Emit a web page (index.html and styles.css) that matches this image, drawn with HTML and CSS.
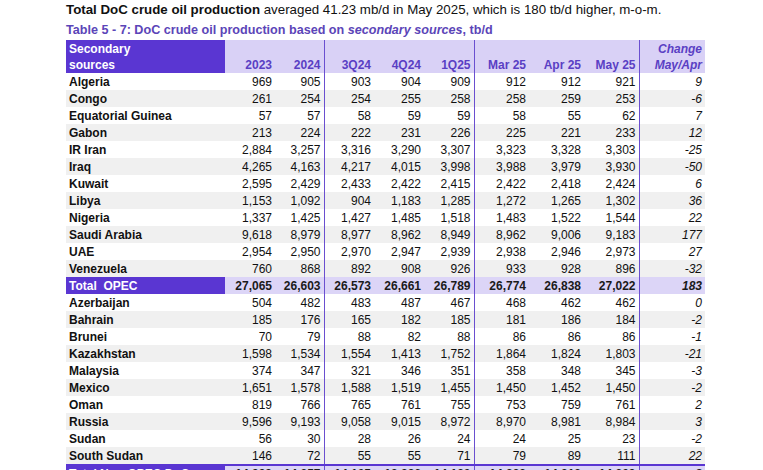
FILE: index.html
```html
<!DOCTYPE html>
<html>
<head>
<meta charset="utf-8">
<link rel="stylesheet" href="styles.css">
</head>
<body>
<div class="page">
  <p class="lead"><b>Total DoC crude oil production</b> averaged 41.23 mb/d in May 2025, which is 180 tb/d higher, m-o-m.</p>
  <p class="caption">Table 5 - 7: DoC crude oil production based on <i>secondary sources</i>, tb/d</p>
  <table class="data">
    <colgroup>
      <col class="c-name"><col class="c-50"><col class="c-49"><col class="c-50"><col class="c-50"><col class="c-50"><col class="c-55"><col class="c-55"><col class="c-55"><col class="c-66">
    </colgroup>
    <thead>
      <tr class="h1"><th class="name">Secondary</th><th></th><th class="sep"></th><th></th><th></th><th class="sep"></th><th></th><th></th><th class="sep"></th><th class="chg">Change</th></tr>
      <tr class="h2"><th class="name">sources</th><th>2023</th><th class="sep">2024</th><th>3Q24</th><th>4Q24</th><th class="sep">1Q25</th><th>Mar 25</th><th>Apr 25</th><th class="sep">May 25</th><th class="chg">May/Apr</th></tr>
    </thead>
    <tbody>
      <tr><td class="name">Algeria</td><td>969</td><td class="sep">905</td><td>903</td><td>904</td><td class="sep">909</td><td>912</td><td>912</td><td class="sep">921</td><td class="chg">9</td></tr>
      <tr class="alt"><td class="name">Congo</td><td>261</td><td class="sep">254</td><td>254</td><td>255</td><td class="sep">258</td><td>258</td><td>259</td><td class="sep">253</td><td class="chg">-6</td></tr>
      <tr><td class="name">Equatorial Guinea</td><td>57</td><td class="sep">57</td><td>58</td><td>59</td><td class="sep">59</td><td>58</td><td>55</td><td class="sep">62</td><td class="chg">7</td></tr>
      <tr class="alt"><td class="name">Gabon</td><td>213</td><td class="sep">224</td><td>222</td><td>231</td><td class="sep">226</td><td>225</td><td>221</td><td class="sep">233</td><td class="chg">12</td></tr>
      <tr><td class="name">IR Iran</td><td>2,884</td><td class="sep">3,257</td><td>3,316</td><td>3,290</td><td class="sep">3,307</td><td>3,323</td><td>3,328</td><td class="sep">3,303</td><td class="chg">-25</td></tr>
      <tr class="alt"><td class="name">Iraq</td><td>4,265</td><td class="sep">4,163</td><td>4,217</td><td>4,015</td><td class="sep">3,998</td><td>3,988</td><td>3,979</td><td class="sep">3,930</td><td class="chg">-50</td></tr>
      <tr><td class="name">Kuwait</td><td>2,595</td><td class="sep">2,429</td><td>2,433</td><td>2,422</td><td class="sep">2,415</td><td>2,422</td><td>2,418</td><td class="sep">2,424</td><td class="chg">6</td></tr>
      <tr class="alt"><td class="name">Libya</td><td>1,153</td><td class="sep">1,092</td><td>904</td><td>1,183</td><td class="sep">1,285</td><td>1,272</td><td>1,265</td><td class="sep">1,302</td><td class="chg">36</td></tr>
      <tr><td class="name">Nigeria</td><td>1,337</td><td class="sep">1,425</td><td>1,427</td><td>1,485</td><td class="sep">1,518</td><td>1,483</td><td>1,522</td><td class="sep">1,544</td><td class="chg">22</td></tr>
      <tr class="alt"><td class="name">Saudi Arabia</td><td>9,618</td><td class="sep">8,979</td><td>8,977</td><td>8,962</td><td class="sep">8,949</td><td>8,962</td><td>9,006</td><td class="sep">9,183</td><td class="chg">177</td></tr>
      <tr><td class="name">UAE</td><td>2,954</td><td class="sep">2,950</td><td>2,970</td><td>2,947</td><td class="sep">2,939</td><td>2,938</td><td>2,946</td><td class="sep">2,973</td><td class="chg">27</td></tr>
      <tr class="alt"><td class="name">Venezuela</td><td>760</td><td class="sep">868</td><td>892</td><td>908</td><td class="sep">926</td><td>933</td><td>928</td><td class="sep">896</td><td class="chg">-32</td></tr>
      <tr class="total"><td class="name">Total&nbsp; OPEC</td><td>27,065</td><td class="sep">26,603</td><td>26,573</td><td>26,661</td><td class="sep">26,789</td><td>26,774</td><td>26,838</td><td class="sep">27,022</td><td class="chg">183</td></tr>
      <tr><td class="name">Azerbaijan</td><td>504</td><td class="sep">482</td><td>483</td><td>487</td><td class="sep">467</td><td>468</td><td>462</td><td class="sep">462</td><td class="chg">0</td></tr>
      <tr class="alt"><td class="name">Bahrain</td><td>185</td><td class="sep">176</td><td>165</td><td>182</td><td class="sep">185</td><td>181</td><td>186</td><td class="sep">184</td><td class="chg">-2</td></tr>
      <tr><td class="name">Brunei</td><td>70</td><td class="sep">79</td><td>88</td><td>82</td><td class="sep">88</td><td>86</td><td>86</td><td class="sep">86</td><td class="chg">-1</td></tr>
      <tr class="alt"><td class="name">Kazakhstan</td><td>1,598</td><td class="sep">1,534</td><td>1,554</td><td>1,413</td><td class="sep">1,752</td><td>1,864</td><td>1,824</td><td class="sep">1,803</td><td class="chg">-21</td></tr>
      <tr><td class="name">Malaysia</td><td>374</td><td class="sep">347</td><td>321</td><td>346</td><td class="sep">351</td><td>358</td><td>348</td><td class="sep">345</td><td class="chg">-3</td></tr>
      <tr class="alt"><td class="name">Mexico</td><td>1,651</td><td class="sep">1,578</td><td>1,588</td><td>1,519</td><td class="sep">1,455</td><td>1,450</td><td>1,452</td><td class="sep">1,450</td><td class="chg">-2</td></tr>
      <tr><td class="name">Oman</td><td>819</td><td class="sep">766</td><td>765</td><td>761</td><td class="sep">755</td><td>753</td><td>759</td><td class="sep">761</td><td class="chg">2</td></tr>
      <tr class="alt"><td class="name">Russia</td><td>9,596</td><td class="sep">9,193</td><td>9,058</td><td>9,015</td><td class="sep">8,972</td><td>8,970</td><td>8,981</td><td class="sep">8,984</td><td class="chg">3</td></tr>
      <tr><td class="name">Sudan</td><td>56</td><td class="sep">30</td><td>28</td><td>26</td><td class="sep">24</td><td>24</td><td>25</td><td class="sep">23</td><td class="chg">-2</td></tr>
      <tr class="alt"><td class="name">South Sudan</td><td>146</td><td class="sep">72</td><td>55</td><td>55</td><td class="sep">71</td><td>79</td><td>89</td><td class="sep">111</td><td class="chg">22</td></tr>
      <tr class="total bottom"><td class="name">Total Non-OPEC DoC</td><td>14,999</td><td class="sep">14,257</td><td>14,105</td><td>13,886</td><td class="sep">14,120</td><td>14,233</td><td>14,212</td><td class="sep">14,209</td><td class="chg">-3</td></tr>
    </tbody>
  </table>
</div>
</body>
</html>
```
FILE: styles.css
```css
html, body {
  margin: 0;
  padding: 0;
  background: #ffffff;
  overflow: hidden;
}
.page {
  padding: 1px 0 0 66px;
  font-family: "Liberation Sans", Arial, sans-serif;
  color: #111;
}
.lead {
  margin: 0;
  font-size: 13.3px;
  line-height: 18px;
  height: 19px;
  white-space: nowrap;
}
.caption {
  margin: 0;
  font-size: 12.6px;
  font-weight: bold;
  color: #5b45b8;
  line-height: 20px;
  height: 20px;
  white-space: nowrap;
}
.data {
  border-collapse: collapse;
  table-layout: fixed;
  width: 639px;
  font-size: 12px;
}
.c-name { width: 159px; }
.c-50 { width: 50px; }
.c-49 { width: 49px; }
.c-55 { width: 55px; }
.c-66 { width: 66px; }
.data th, .data td {
  padding: 0 3px 0 0;
  text-align: right;
  white-space: nowrap;
  overflow: hidden;
}
.data thead tr.h1 th { height: 17px; }
.data thead tr.h2 th { height: 16px; }
.data thead th {
  background: #d9d1f6;
  color: #5a3fc4;
  font-weight: bold;
  vertical-align: bottom;
  line-height: 15px;
}
.data thead th.name {
  background: #5a36d2;
  color: #fff;
  text-align: left;
  padding-left: 3px;
}
.data thead th.chg { font-style: italic; }
.data tbody td {
  height: 15px;
  padding-top: 2px;
  line-height: 15px;
  color: #111;
}
.data tbody tr.alt td { background: #f0f0f0; }
.data td.name {
  font-weight: bold;
  text-align: left;
  padding-left: 3px;
}
.data td.chg { font-style: italic; }
.data .sep { border-right: 1px solid #6a4fd0; }
.data tr.total td {
  background: #dcd5f7;
  font-weight: bold;
  color: #1a1a1a;
}
.data tr.total td.name {
  background: #5a36d2;
  color: #fff;
}
.data tr.bottom td {
  border-top: 2px solid #5a36d2;
  padding-top: 0;
  height: 17px;
}
```
